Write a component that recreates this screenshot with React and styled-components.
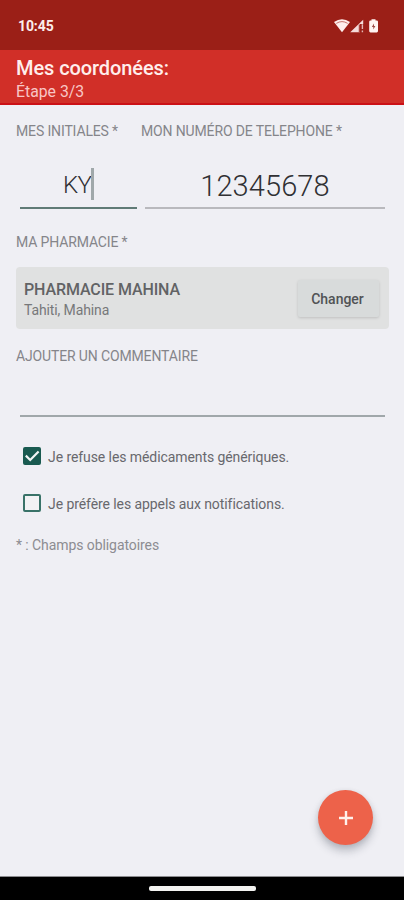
import React from "react";
import styled, { createGlobalStyle } from "styled-components";

const GlobalStyle = createGlobalStyle`
  * { box-sizing: border-box; }
  body { margin: 0; background: #efeff4; font-family: Roboto, "Liberation Sans", sans-serif; }
  button, input { font-family: inherit; }
`;

const Screen = styled.div`
  position: relative;
  display: flex;
  flex-direction: column;
  width: 404px;
  height: 900px;
  overflow: hidden;
  background: #efeff4;
`;

const StatusBar = styled.div`
  display: flex;
  align-items: center;
  justify-content: space-between;
  height: 50px;
  padding: 1px 24px 0 18px;
  background: #9b1f17;
  color: #fbeeec;
`;

const Clock = styled.span`
  font-size: 14px;
  font-weight: 700;
  letter-spacing: -0.1px;
`;

const StatusIcons = styled.svg`
  display: block;
  width: 46px;
  height: 16px;
`;

const Header = styled.header`
  height: 55px;
  padding: 6px 16px 0;
  background: #d12f28;
  border-bottom: 2px solid #cb1116;
  color: #ffeeec;
`;

const Title = styled.h1`
  margin: 0;
  font-size: 20px;
  line-height: 24px;
  font-weight: 500;
  white-space: nowrap;
  letter-spacing: -0.08px;
`;

const Step = styled.div`
  font-size: 15.8px;
  line-height: 24px;
  color: #f8c6c5;
`;

const Form = styled.main`
  flex: 1;
  padding: 16px 16px 0;
`;

const Label = styled.div`
  font-size: 14px;
  line-height: 20px;
  color: #85858a;
  white-space: nowrap;
  letter-spacing: -0.14px;
`;

const Columns = styled.div`
  display: grid;
  grid-template-columns: 125px 1fr;
  height: 111px;
`;

const Value = styled.div`
  display: flex;
  align-items: center;
  justify-content: center;
  height: 53px;
  margin: 15px ${(p) => p.$right}px 0 4px;
  padding-top: ${(p) => p.$top}px;
  border-bottom: 2px solid ${(p) => p.$line};
  color: #303033;
  font-size: ${(p) => p.$size}px;
  font-weight: ${(p) => p.$weight};
  letter-spacing: ${(p) => p.$spacing};
`;

const Caret = styled.span`
  width: 3px;
  height: 32px;
  margin-top: -2px;
  background: #a0a8aa;
`;

const PharmacyCard = styled.section`
  display: flex;
  align-items: center;
  justify-content: space-between;
  height: 62px;
  margin: 15px -1px 17px 0;
  padding: 0 10px 0 8px;
  border-radius: 4px;
  background: #e0e1e1;
`;

const PharmacyName = styled.div`
  font-size: 16px;
  line-height: 21px;
  font-weight: 500;
  color: #626365;
  padding-top: 2px;
  white-space: nowrap;
  letter-spacing: -0.11px;
`;

const PharmacyPlace = styled.div`
  font-size: 14px;
  line-height: 20px;
  color: #77787a;
  white-space: nowrap;
  letter-spacing: -0.12px;
`;

const ChangeButton = styled.button`
  width: 81px;
  height: 37px;
  margin-top: 1px;
  padding: 0 2px 0 0;
  border: 0;
  border-radius: 2px;
  background: #d8dbdb;
  box-shadow: 0 1px 3px rgba(0, 0, 0, 0.15);
  color: #515355;
  font-size: 14px;
  font-weight: 500;
`;

const CommentField = styled.div`
  height: 51px;
  margin: 0 3px 16px 4px;
  border-bottom: 2px solid #a0a7aa;
`;

const Option = styled.label`
  display: flex;
  align-items: center;
  height: 47px;
  padding-left: 6px;
  gap: 6px;
  color: #68686d;
  font-size: 14px;
  white-space: nowrap;
  letter-spacing: -0.08px;
`;

const CheckIcon = styled.svg`
  display: block;
  width: 20px;
  height: 20px;
  margin-top: -1px;
`;

const Note = styled.div`
  margin-top: 8px;
  font-size: 14px;
  line-height: 20px;
  color: #8c8c91;
  letter-spacing: -0.08px;
`;

const AddButton = styled.button`
  position: absolute;
  right: 31px;
  bottom: 55px;
  display: grid;
  place-items: center;
  width: 55px;
  height: 55px;
  padding: 0;
  border: 0;
  border-radius: 50%;
  background: #ed624a;
  box-shadow: 0 6px 9px rgba(40, 45, 60, 0.26), 0 1px 5px rgba(40, 45, 60, 0.1);
`;

const NavigationBar = styled.footer`
  display: flex;
  justify-content: center;
  height: 24px;
  padding: 9px 0 0 1px;
  border-top: 1px solid #8c8c8f;
  background: #000;
`;

const HomeHandle = styled.div`
  width: 107px;
  height: 5px;
  border-radius: 2px;
  background: #f3f3f1;
`;

function Checkbox({ checked }) {
  return (
    <CheckIcon viewBox="0 0 20 20">
      <rect x="2" y="2" width="16" height="16" rx="1" fill={checked ? "#195a50" : "#f2f2f4"} stroke={checked ? "#195a50" : "#397268"} strokeWidth="2" />
      {checked && <path d="M3.8 9.6 L8.2 14 L16.6 5.4" fill="none" stroke="#f2f5f5" strokeWidth="2.2" />}
    </CheckIcon>
  );
}

export default function App() {
  return (
    <Screen>
      <GlobalStyle />
      <StatusBar>
        <Clock>10:45</Clock>
        <StatusIcons viewBox="0 0 46 16">
          <path d="M0 4 Q8 -1.5 16 4 L8 14.2 Z" fill="#fff0ee" />
          <path d="M2.3 5.4 Q8 1.8 13.7 5.4" fill="none" stroke="#b9574f" strokeWidth="0.8" />
          <path d="M16.2 14.2 L29.2 1.8 V6 H26 V14.2 Z" fill="#f5dcda" />
          <path d="M25.3 6.5 V14.2" stroke="#9b1f17" strokeWidth="1" />
          <path d="M28.4 6.2 V11 M28.4 12.5 V14.2" stroke="#e4b9b5" strokeWidth="1.4" />
          <path d="M37.5 1.2 H41.5 V2.5 H42.7 Q44 2.5 44 3.8 V13 Q44 14.4 42.7 14.4 H36.5 Q35.2 14.4 35.2 13 V3.8 Q35.2 2.5 36.5 2.5 H37.5 Z" fill="#fff4f2" />
          <path d="M40 5.5 L37.8 9 H39.3 V11.5 L41.4 8 H40 Z" fill="#9b4b45" />
        </StatusIcons>
      </StatusBar>
      <Header>
        <Title>Mes coordonées:</Title>
        <Step>Étape 3/3</Step>
      </Header>
      <Form>
        <Columns>
          <div>
            <Label>MES INITIALES *</Label>
            <Value $size={24} $weight={300} $spacing="-0.8px" $top={7} $right={4} $line="#607b76">
              KY<Caret />
            </Value>
          </div>
          <div>
            <Label>MON NUMÉRO DE TELEPHONE *</Label>
            <Value $size={29} $weight={300} $spacing="0.1px" $top={9} $right={3} $line="#b9b9bd">
              12345678
            </Value>
          </div>
        </Columns>
        <Label>MA PHARMACIE *</Label>
        <PharmacyCard>
          <div>
            <PharmacyName>PHARMACIE MAHINA</PharmacyName>
            <PharmacyPlace>Tahiti, Mahina</PharmacyPlace>
          </div>
          <ChangeButton>Changer</ChangeButton>
        </PharmacyCard>
        <Label>AJOUTER UN COMMENTAIRE</Label>
        <CommentField />
        <Option><Checkbox checked />Je refuse les médicaments génériques.</Option>
        <Option><Checkbox />Je préfère les appels aux notifications.</Option>
        <Note>* : Champs obligatoires</Note>
      </Form>
      <NavigationBar><HomeHandle /></NavigationBar>
      <AddButton aria-label="Ajouter">
        <svg width="16" height="16" viewBox="0 0 16 16">
          <path d="M8 1 V15 M1 8 H15" stroke="#fff1ec" strokeWidth="2.4" />
        </svg>
      </AddButton>
    </Screen>
  );
}
